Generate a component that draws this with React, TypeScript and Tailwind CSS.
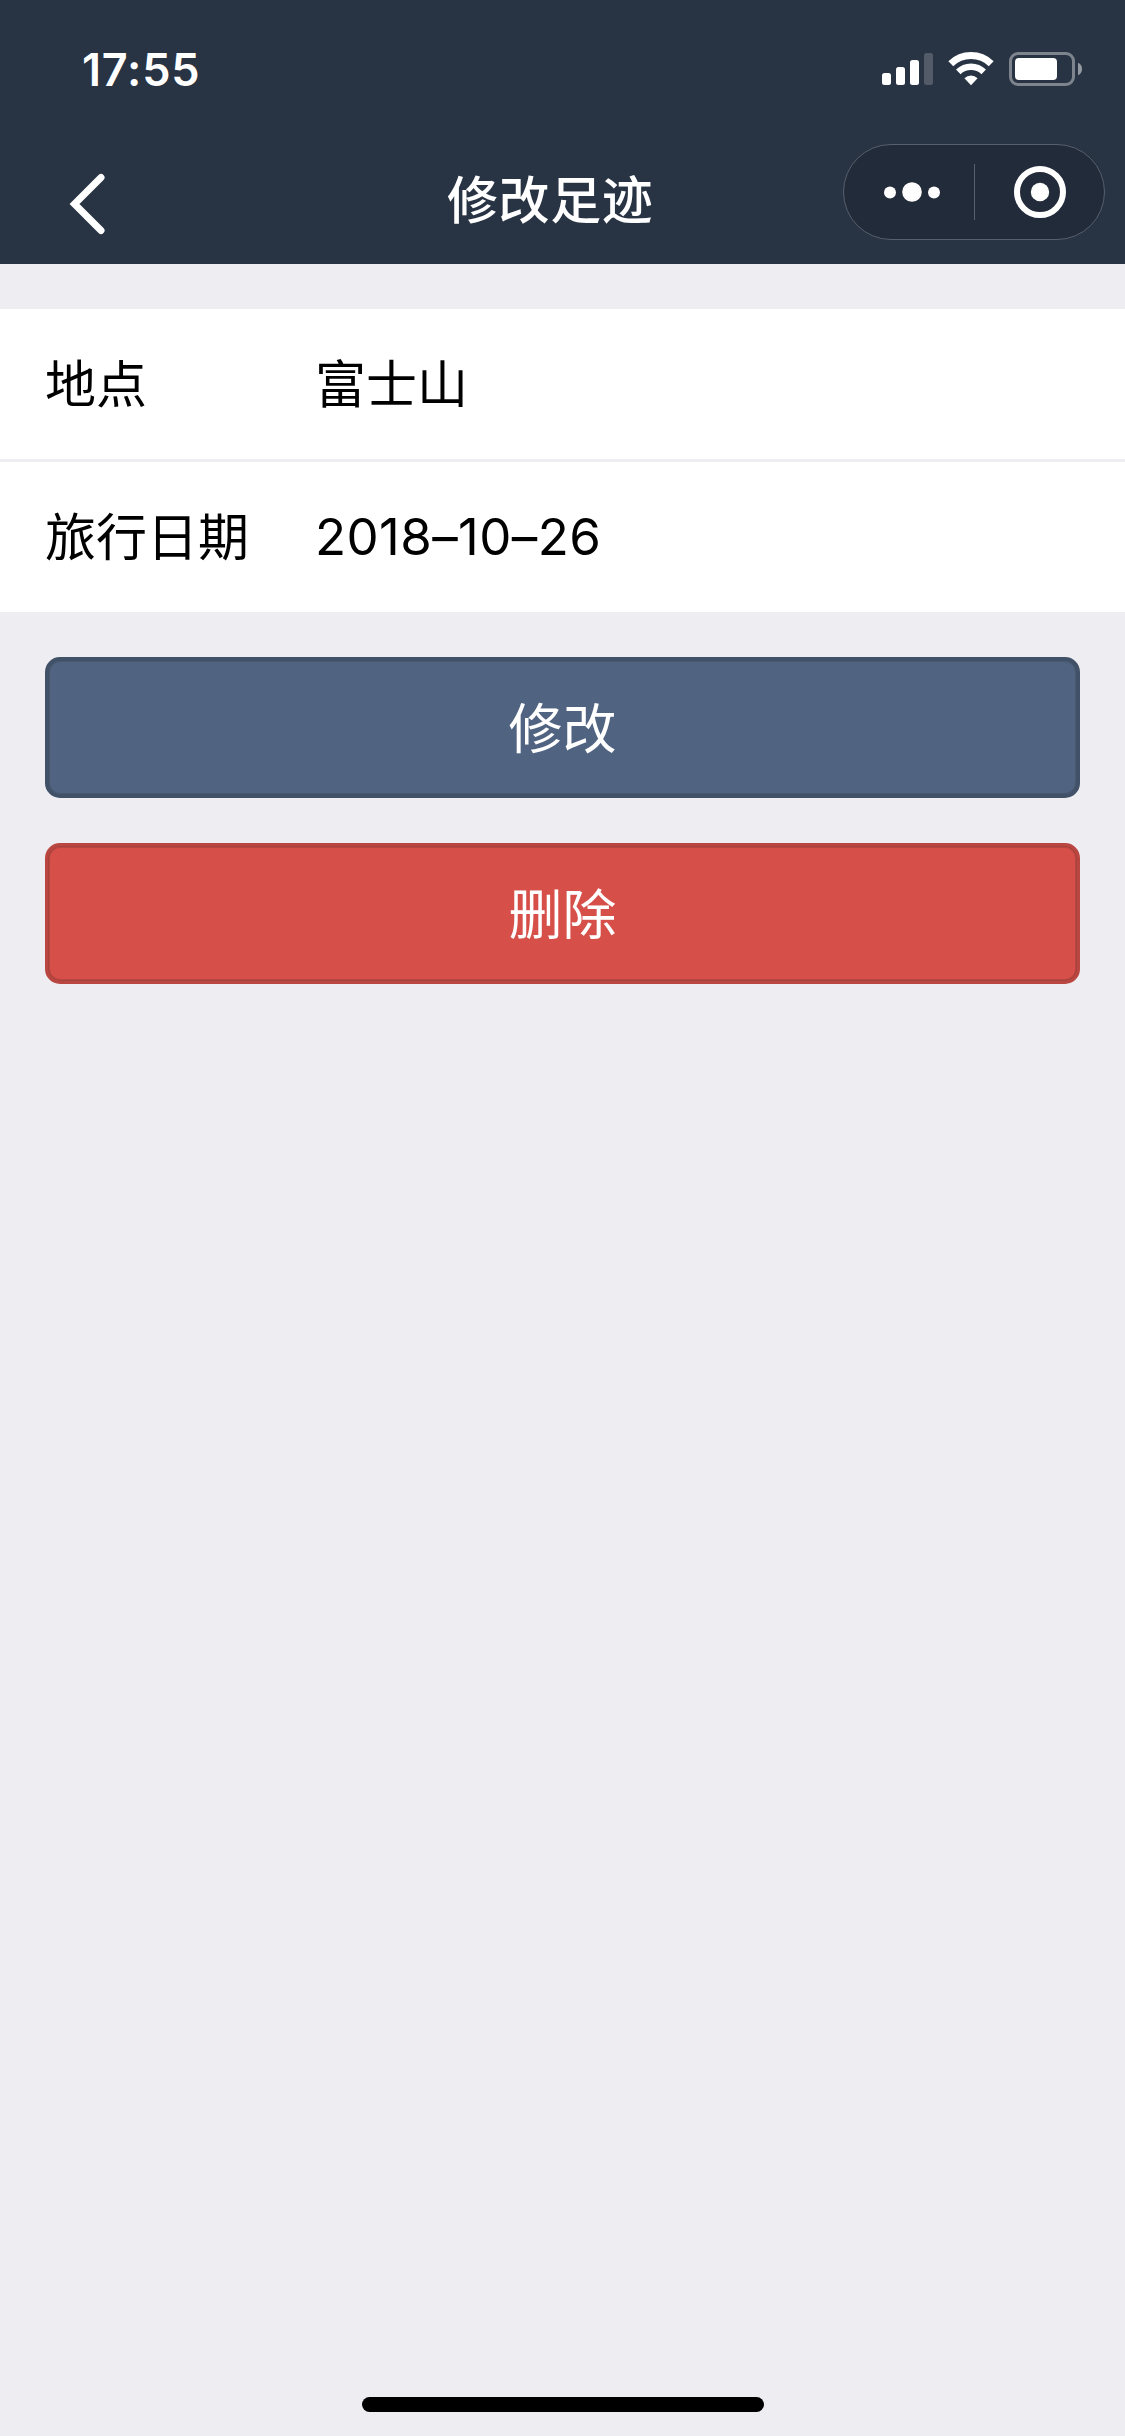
import type { ReactNode } from 'react'

type Field = { label: string; value: string; valueClass?: string }

const fields: Field[] = [
  { label: '地点', value: '富士山', valueClass: 'pt-[3px]' },
  { label: '旅行日期', value: '2018–10–26', valueClass: 'tracking-[0.4px] pt-px' },
]

function StatusBar() {
  return (
    <div className="flex h-[138px] items-center justify-between pl-[82px] pr-[42px]">
      <span className="text-[45px] leading-none font-semibold tracking-[0.8px]">17:55</span>
      <div className="flex items-center">
        {/* signal */}
        <svg width="52" height="34" viewBox="0 0 52 34" fill="currentColor">
          <rect x="0" y="21" width="9" height="12" rx="2.5" />
          <rect x="14" y="15" width="9" height="18" rx="2.5" />
          <rect x="28" y="8" width="9" height="25" rx="2.5" />
          <rect x="42" y="1" width="9" height="32" rx="2.5" opacity="0.2" />
        </svg>
        {/* wifi */}
        <svg className="ml-[14px]" width="46" height="34" viewBox="0 0 46 34" fill="none" stroke="currentColor">
          <path d="M2.8 11.7a29 29 0 0 1 40.4 0" strokeWidth="7" />
          <path d="M10.3 19.8a18.3 18.3 0 0 1 25.4 0" strokeWidth="6.5" />
          <path d="M23 33.200l-6.600-7a9.500 9.500 0 0 1 13.200 0z" fill="currentColor" stroke="none" />
        </svg>
        {/* battery */}
        <svg className="ml-[15px]" width="74" height="34" viewBox="0 0 74 34" fill="none">
          <rect x="1.5" y="1.5" width="63" height="31" rx="7.5" stroke="currentColor" strokeWidth="3" opacity="0.4" />
          <rect x="6" y="6" width="42" height="22" rx="4" fill="currentColor" />
          <path d="M69 10.8c5.400 2 5.400 10.400 0 12.400z" fill="currentColor" opacity="0.5" />
        </svg>
      </div>
    </div>
  )
}

function Capsule() {
  return (
    <div className="flex h-24 w-[262px] items-center rounded-full border border-[#57606b] bg-[#222b39]">
      <button className="flex w-[130px] items-center justify-center pl-[6px]">
        <svg width="58" height="22" viewBox="0 0 58 22" fill="currentColor">
          <circle cx="7" cy="11.5" r="6" />
          <circle cx="29" cy="11" r="9.8" />
          <circle cx="51" cy="11.5" r="6" />
        </svg>
      </button>
      <span className="h-14 w-px bg-[#57606b]" />
      <button className="flex flex-1 items-center justify-center pl-px">
        <svg width="52" height="52" viewBox="0 0 52 52" fill="none">
          <circle cx="26" cy="26" r="23" stroke="currentColor" strokeWidth="6" />
          <circle cx="26" cy="26" r="9.2" fill="currentColor" />
        </svg>
      </button>
    </div>
  )
}

function NavBar() {
  return (
    <div className="flex h-[126px] items-start pr-5 pl-[68px]">
      <button className="mt-[34px]">
        <svg width="38" height="64" viewBox="0 0 38 64" fill="none" stroke="currentColor">
          <path d="M33 5.5 6.5 32 33 58.5" strokeWidth="7" strokeLinecap="round" />
        </svg>
      </button>
      <h1 className="mt-[37px] ml-[341px] flex-1 text-[51px] leading-[52px] font-medium tracking-[0.6px]">修改足迹</h1>
      <div className="mt-1.5">
        <Capsule />
      </div>
    </div>
  )
}

function FieldRow({ label, value, valueClass = '' }: Field) {
  return (
    <div className="flex h-[150px] items-center bg-white px-[45px] text-[51px]">
      <span className="w-[270px] pt-[3px]">{label}</span>
      <span className={valueClass}>{value}</span>
    </div>
  )
}

function ActionButton({ className, children }: { className: string; children: ReactNode }) {
  return (
    <button
      className={`flex h-[141px] w-full items-center justify-center rounded-[15px] pt-[3px] text-[54px] text-white ${className}`}
    >
      {children}
    </button>
  )
}

export default function App() {
  return (
    <div className="flex h-[2436px] w-[1125px] flex-col bg-[#eeedf2] font-[Inter,'Noto_Sans_CJK_SC',sans-serif] text-black">
      <header className="h-[264px] bg-[#283343] text-white">
        <StatusBar />
        <NavBar />
      </header>

      <main className="flex-1">
        <div className="mt-[45px] flex flex-col gap-[3px]">
          {fields.map((f) => (
            <FieldRow key={f.label} {...f} />
          ))}
        </div>
        <div className="flex flex-col gap-[45px] p-[45px]">
          <ActionButton className="border-4 border-[#415167] bg-[#506380] shadow-[inset_0_0_0_1px_#47586f]">
            修改
          </ActionButton>
          <ActionButton className="border-[3px] border-[#b94640] bg-[#d64f49] shadow-[inset_0_0_0_1px_#a8423c,inset_0_0_0_2px_#b94640]">
            删除
          </ActionButton>
        </div>
      </main>

      {/* home indicator */}
      <div className="mx-auto mb-6 h-[15px] w-[402px] rounded-full bg-black" />
    </div>
  )
}
